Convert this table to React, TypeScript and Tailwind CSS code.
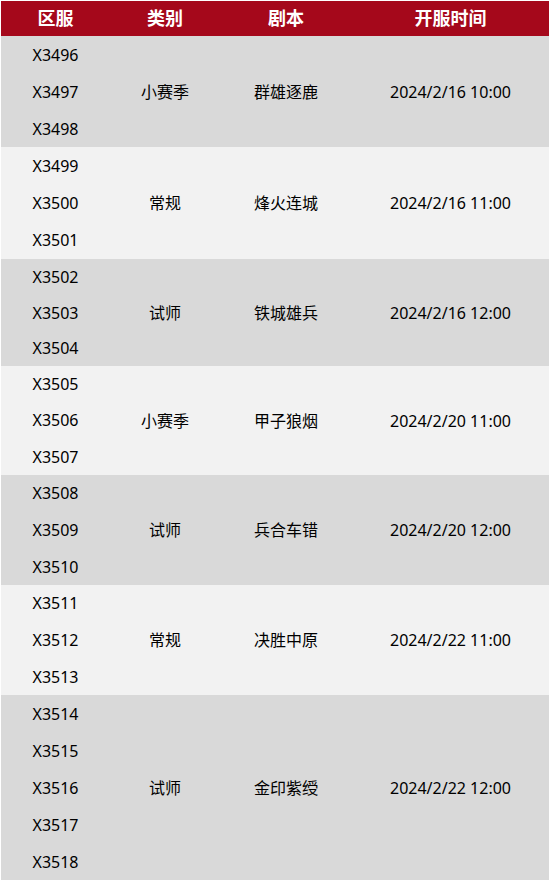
import React from "react";

interface Group {
  servers: string[];
  type: string;
  script: string;
  time: string;
  height: string;
  bg: string;
}

const groups: Group[] = [
  { servers: ["X3496", "X3497", "X3498"], type: "小赛季", script: "群雄逐鹿", time: "2024/2/16 10:00", height: "h-[111px]", bg: "bg-[#d9d9d9]" },
  { servers: ["X3499", "X3500", "X3501"], type: "常规", script: "烽火连城", time: "2024/2/16 11:00", height: "h-[112px]", bg: "bg-[#f2f2f2]" },
  { servers: ["X3502", "X3503", "X3504"], type: "试师", script: "铁城雄兵", time: "2024/2/16 12:00", height: "h-[107px]", bg: "bg-[#d9d9d9]" },
  { servers: ["X3505", "X3506", "X3507"], type: "小赛季", script: "甲子狼烟", time: "2024/2/20 11:00", height: "h-[109px]", bg: "bg-[#f2f2f2]" },
  { servers: ["X3508", "X3509", "X3510"], type: "试师", script: "兵合车错", time: "2024/2/20 12:00", height: "h-[110px]", bg: "bg-[#d9d9d9]" },
  { servers: ["X3511", "X3512", "X3513"], type: "常规", script: "决胜中原", time: "2024/2/22 11:00", height: "h-[110px]", bg: "bg-[#f2f2f2]" },
  { servers: ["X3514", "X3515", "X3516", "X3517", "X3518"], type: "试师", script: "金印紫绶", time: "2024/2/22 12:00", height: "h-[185px]", bg: "bg-[#d9d9d9]" },
];

const App: React.FC = () => {
  return (
    <div
      className="w-[549px] h-[880px] bg-white pt-px pl-px text-black"
      style={{ fontFamily: '"Noto Sans", "Noto Sans CJK SC", sans-serif' }}
    >
      {/* Header */}
      <div className="flex h-[35px] bg-[#a5081b] text-white text-[18px] font-bold">
        <div className="w-[109px] flex items-center justify-center">区服</div>
        <div className="w-[110px] flex items-center justify-center">类别</div>
        <div className="w-[132px] flex items-center justify-center">剧本</div>
        <div className="flex-1 flex items-center justify-center">开服时间</div>
      </div>

      {/* Body */}
      {groups.map((g) => (
        <div key={g.servers[0]} className={`flex text-[16px] ${g.height} ${g.bg}`}>
          <div className="w-[109px] flex flex-col">
            {g.servers.map((s) => (
              <div key={s} className="flex-1 flex items-center justify-center">
                {s}
              </div>
            ))}
          </div>
          <div className="w-[110px] flex items-center justify-center">{g.type}</div>
          <div className="w-[132px] flex items-center justify-center">{g.script}</div>
          <div className="flex-1 flex items-center justify-center">{g.time}</div>
        </div>
      ))}
    </div>
  );
};

export default App;
